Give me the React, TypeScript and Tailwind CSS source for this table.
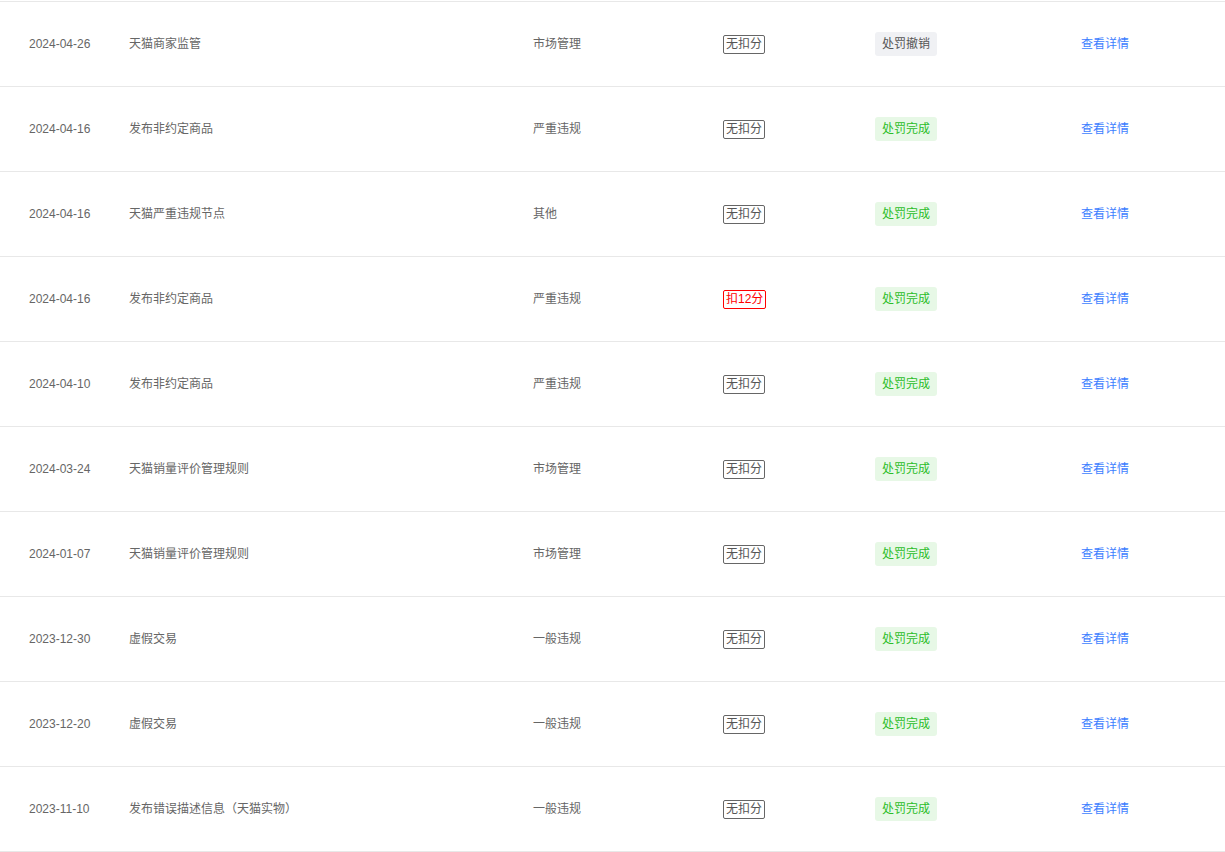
const rows = [
  { date: "2024-04-26", title: "天猫商家监管", type: "市场管理", score: "无扣分", status: "处罚撤销" },
  { date: "2024-04-16", title: "发布非约定商品", type: "严重违规", score: "无扣分", status: "处罚完成" },
  { date: "2024-04-16", title: "天猫严重违规节点", type: "其他", score: "无扣分", status: "处罚完成" },
  { date: "2024-04-16", title: "发布非约定商品", type: "严重违规", score: "扣12分", status: "处罚完成" },
  { date: "2024-04-10", title: "发布非约定商品", type: "严重违规", score: "无扣分", status: "处罚完成" },
  { date: "2024-03-24", title: "天猫销量评价管理规则", type: "市场管理", score: "无扣分", status: "处罚完成" },
  { date: "2024-01-07", title: "天猫销量评价管理规则", type: "市场管理", score: "无扣分", status: "处罚完成" },
  { date: "2023-12-30", title: "虚假交易", type: "一般违规", score: "无扣分", status: "处罚完成" },
  { date: "2023-12-20", title: "虚假交易", type: "一般违规", score: "无扣分", status: "处罚完成" },
  { date: "2023-11-10", title: "发布错误描述信息（天猫实物）", type: "一般违规", score: "无扣分", status: "处罚完成" },
];

const App = () => {
  return (
    <div className="w-[1225px] bg-white pt-px font-['Liberation_Sans','Noto_Sans_CJK_SC',sans-serif] text-xs text-[#666]">
      <div className="border-b border-[#e8e8e8]">
        {rows.map((row, index) => (
          <div key={index} className="flex h-[85px] items-center border-t border-[#e8e8e8]">
            <div className="w-[129px] pl-[29px]">{row.date}</div>
            <div className="w-[404px]">{row.title}</div>
            <div className="w-[190px]">{row.type}</div>
            <div className="w-[152px]">
              {row.score === "无扣分" ? (
                <span className="inline-block rounded-[2px] border border-[#666] px-[2px] leading-[17px] text-[#555]">
                  {row.score}
                </span>
              ) : (
                <span className="inline-block rounded-[2px] border border-[#ff0000] px-[2px] leading-[17px] text-[#ff0000]">
                  {row.score}
                </span>
              )}
            </div>
            <div className="w-[206px]">
              {row.status === "处罚撤销" ? (
                <span className="inline-block rounded-[3px] bg-[#f0f1f4] px-[7px] leading-[24px] text-[#555]">
                  {row.status}
                </span>
              ) : (
                <span className="inline-block rounded-[3px] bg-[#e7f8e6] px-[7px] leading-[24px] text-[#2bbd29]">
                  {row.status}
                </span>
              )}
            </div>
            <div className="cursor-pointer text-[#3d7eff]">查看详情</div>
          </div>
        ))}
      </div>
    </div>
  );
};

export default App;
